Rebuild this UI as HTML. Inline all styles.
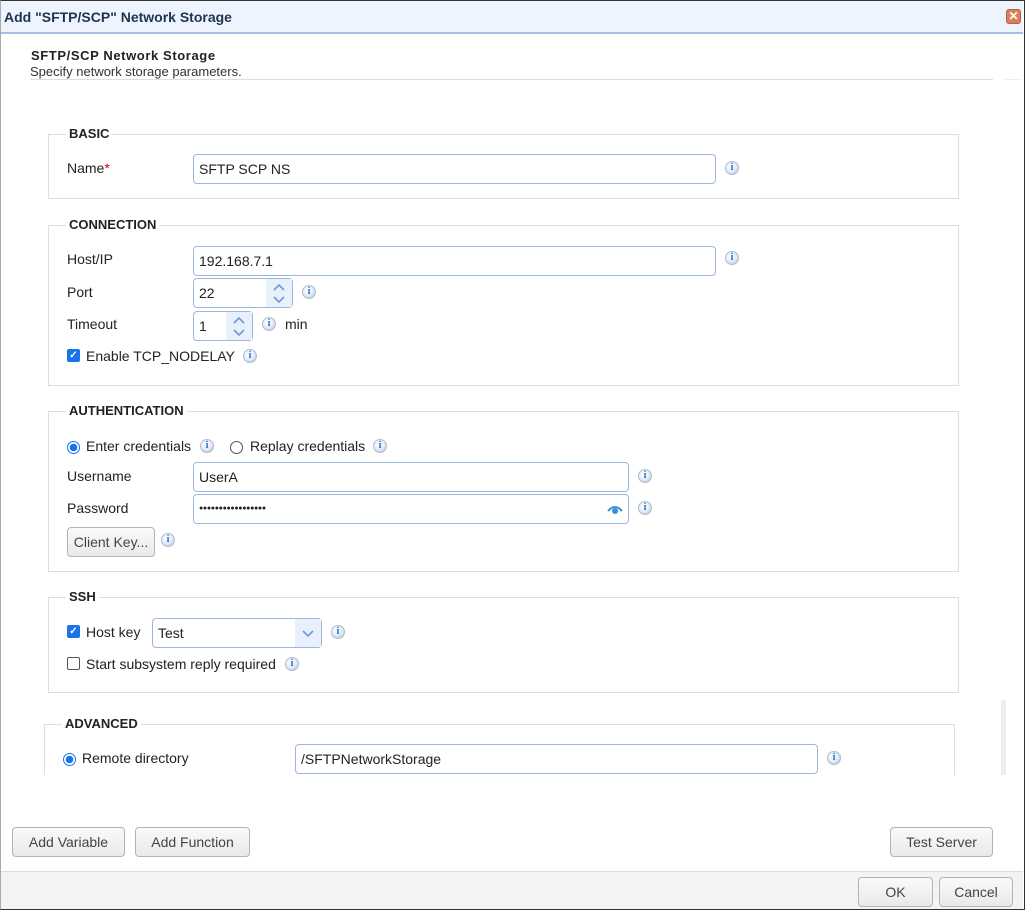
<!DOCTYPE html>
<html><head><style>
*{box-sizing:border-box}
body{margin:0;width:1025px;height:910px;overflow:hidden;font-family:"Liberation Sans",Arial,sans-serif;font-size:14px;color:#222;background:#fff;position:relative}
.a{position:absolute}
.frame{position:absolute;left:0;top:0;width:1025px;height:910px;border:1px solid #333;border-left-color:#aaa;z-index:5;pointer-events:none}
.title{left:1px;top:1px;width:1022px;height:33px;background:#eef4fd;border-bottom:2px solid #a9bde6;font-weight:bold;font-size:14px;color:#1f3350;padding:8px 3px}
.close{left:1006px;top:9px;width:15px;height:15px;background:#d9805a;border:1px solid #b9603e;border-radius:3px;color:#fff;font-size:12px;line-height:13px;text-align:center;font-weight:bold}
fieldset{position:absolute;border:1px solid #ddd;margin:0;padding:0}
.leg{position:absolute;background:#fff;font-weight:bold;font-size:13px;padding:0 3px;color:#222}
.inp{position:absolute;height:30px;border:1px solid #9bb7e0;border-radius:4px;padding:6px 5px;font-size:14px;background:#fff}
.lbl{position:absolute;font-size:14px}
.info{position:absolute;width:14px;height:14px;border-radius:50%;background:radial-gradient(circle at 40% 35%,#fff 0,#e3ecf8 50%,#a9b9d2 100%);border:1px solid #b0bccc;color:#1f6fd1;font-size:10px;font-weight:bold;line-height:12px;text-align:center;font-family:"Liberation Serif",serif}
.btn{position:absolute;height:30px;border:1px solid #b3b3b3;border-radius:4px;background:linear-gradient(#fafafa,#e9e9e9);font-size:14px;color:#444;text-align:center;line-height:28px}
.spin{position:absolute;top:0;right:0;width:26px;height:28px;background:#e8f0fb}
.chk{position:absolute;width:13px;height:13px;border-radius:2px;background:#1a73e8;color:#fff;font-size:10px;line-height:13px;text-align:center;font-weight:bold}
.chk0{position:absolute;width:13px;height:13px;border:1px solid #555;border-radius:2px;background:#fff}
.rad{position:absolute;width:13px;height:13px;border-radius:50%;border:1px solid #1a73e8;background:radial-gradient(circle,#1a73e8 0,#1a73e8 3.5px,#fff 4px)}
.rad0{position:absolute;width:13px;height:13px;border-radius:50%;border:1px solid #555;background:#fff}
</style></head><body>
<div class="frame"></div>
<div class="a title">Add "SFTP/SCP" Network Storage</div>
<div class="a close">✕</div>
<div class="a" style="left:31px;top:48px;font-weight:bold;font-size:13px;letter-spacing:0.6px">SFTP/SCP Network Storage</div>
<div class="a" style="left:30px;top:64px;font-size:13px;color:#333">Specify network storage parameters.</div>
<div class="a" style="left:30px;top:79px;width:963px;height:1px;background:#ddd"></div>
<div class="a" style="left:1005px;top:79px;width:17px;height:1px;background:#eee"></div>

<fieldset style="left:48px;top:134px;width:911px;height:65px"></fieldset>
<div class="leg" style="left:66px;top:126px">BASIC</div>
<div class="lbl" style="left:67px;top:160px">Name<span style="color:#c00">*</span></div>
<div class="inp" style="left:193px;top:154px;width:523px">SFTP SCP NS</div>
<div class="info" style="left:725px;top:161px">i</div>

<fieldset style="left:48px;top:225px;width:911px;height:161px"></fieldset>
<div class="leg" style="left:66px;top:217px">CONNECTION</div>
<div class="lbl" style="left:67px;top:251px">Host/IP</div>
<div class="inp" style="left:193px;top:246px;width:523px">192.168.7.1</div>
<div class="info" style="left:725px;top:251px">i</div>
<div class="lbl" style="left:67px;top:284px">Port</div>
<div class="inp" style="left:193px;top:278px;width:100px">22<div class="spin"><svg width="26" height="28"><path d="M8 11l5-5 5 5M8 18l5 5 5-5" fill="none" stroke="#6a9bd8" stroke-width="1.6"/></svg></div></div>
<div class="info" style="left:302px;top:285px">i</div>
<div class="lbl" style="left:67px;top:316px">Timeout</div>
<div class="inp" style="left:193px;top:311px;width:60px">1<div class="spin"><svg width="26" height="28"><path d="M8 11l5-5 5 5M8 18l5 5 5-5" fill="none" stroke="#6a9bd8" stroke-width="1.6"/></svg></div></div>
<div class="info" style="left:262px;top:317px">i</div>
<div class="lbl" style="left:285px;top:316px">min</div>
<div class="chk" style="left:67px;top:349px">✓</div>
<div class="lbl" style="left:86px;top:348px">Enable TCP_NODELAY</div>
<div class="info" style="left:243px;top:349px">i</div>

<fieldset style="left:48px;top:411px;width:911px;height:161px"></fieldset>
<div class="leg" style="left:66px;top:403px">AUTHENTICATION</div>
<div class="rad" style="left:67px;top:441px"></div>
<div class="lbl" style="left:86px;top:438px">Enter credentials</div>
<div class="info" style="left:200px;top:439px">i</div>
<div class="rad0" style="left:230px;top:441px"></div>
<div class="lbl" style="left:250px;top:438px">Replay credentials</div>
<div class="info" style="left:373px;top:439px">i</div>
<div class="lbl" style="left:67px;top:468px">Username</div>
<div class="inp" style="left:193px;top:462px;width:436px">UserA</div>
<div class="info" style="left:638px;top:469px">i</div>
<div class="lbl" style="left:67px;top:500px">Password</div>
<div class="inp" style="left:193px;top:494px;width:436px;font-size:7px;padding-top:10px;letter-spacing:-0.3px">●●●●●●●●●●●●●●●●●<svg style="position:absolute;right:5px;top:8px" width="16" height="12"><path d="M1 8Q8 0 15 8" fill="none" stroke="#3a8fd8" stroke-width="2"/><circle cx="8" cy="8" r="3" fill="#3a8fd8"/></svg></div>
<div class="info" style="left:638px;top:501px">i</div>
<div class="btn" style="left:67px;top:527px;width:88px">Client Key...</div>
<div class="info" style="left:161px;top:533px">i</div>

<fieldset style="left:48px;top:597px;width:911px;height:96px"></fieldset>
<div class="leg" style="left:66px;top:589px">SSH</div>
<div class="chk" style="left:67px;top:625px">✓</div>
<div class="lbl" style="left:86px;top:624px">Host key</div>
<div class="inp" style="left:152px;top:618px;width:170px">Test<span style="position:absolute;right:0;top:0;width:26px;height:28px;background:#e8f0fb"><svg width="26" height="28"><path d="M8 12l5 5 5-5" fill="none" stroke="#6a9bd8" stroke-width="1.6"/></svg></span></div>
<div class="info" style="left:331px;top:625px">i</div>
<div class="chk0" style="left:67px;top:657px"></div>
<div class="lbl" style="left:86px;top:656px">Start subsystem reply required</div>
<div class="info" style="left:285px;top:657px">i</div>

<div class="a" style="left:44px;top:724px;width:911px;height:51px;border:1px solid #ddd;border-bottom:none"></div>
<div class="leg" style="left:62px;top:716px">ADVANCED</div>
<div class="rad" style="left:63px;top:753px"></div>
<div class="lbl" style="left:82px;top:750px">Remote directory</div>
<div class="inp" style="left:295px;top:744px;width:523px">/SFTPNetworkStorage</div>
<div class="info" style="left:827px;top:751px">i</div>
<div class="a" style="left:1px;top:775px;width:1000px;height:20px;background:#fff"></div>
<div class="a" style="left:1001px;top:700px;width:5px;height:75px;background:#eee"></div>

<div class="btn" style="left:12px;top:827px;width:113px">Add Variable</div>
<div class="btn" style="left:135px;top:827px;width:115px">Add Function</div>
<div class="btn" style="left:890px;top:827px;width:103px">Test Server</div>
<div class="a" style="left:1px;top:871px;width:1022px;height:38px;background:#f3f3f3;border-top:1px solid #ddd"></div>
<div class="btn" style="left:858px;top:877px;width:75px">OK</div>
<div class="btn" style="left:939px;top:877px;width:74px">Cancel</div>
</body></html>
